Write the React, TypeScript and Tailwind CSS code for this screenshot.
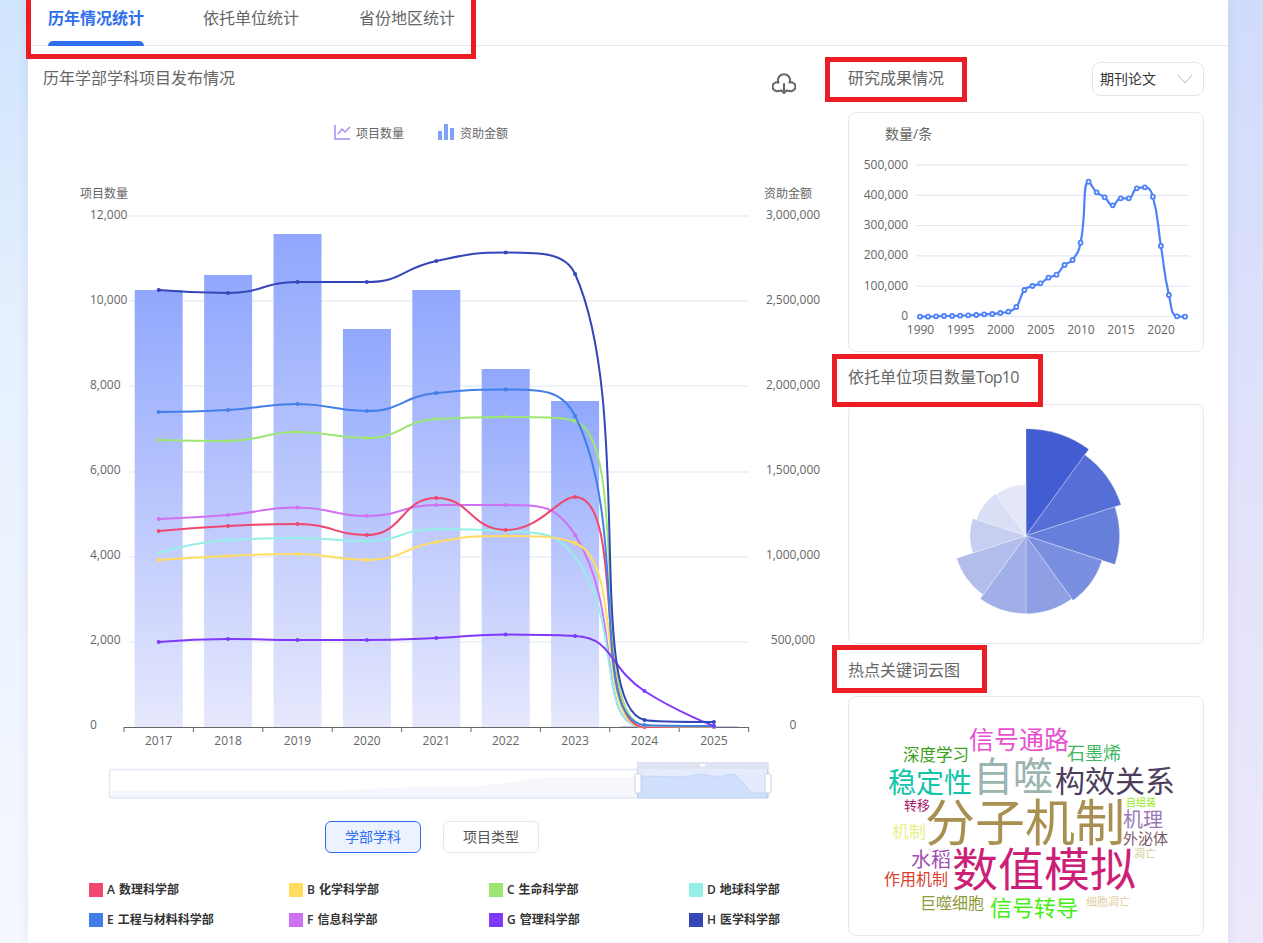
import React from 'react';

const years = ['2017', '2018', '2019', '2020', '2021', '2022', '2023', '2024', '2025'];
const stepX = 69.4;
const catX = (i: number) => 158.7 + i * stepX;

const barTops = [290, 275, 234, 329, 290, 369, 401, 726, 726];

const series = [
  { color: '#cf71f3', ys: [519, 515, 507.5, 516, 505, 505, 535, 727, 727] },
  { color: '#96efe6', ys: [553, 540, 538, 541, 529, 531, 557, 727, 727] },
  { color: '#ffdd5f', ys: [560, 556, 554, 560, 542, 536, 543, 727, 727] },
  { color: '#ef476f', ys: [531, 526, 524, 535, 498, 530, 497, 727, 727] },
  { color: '#9ee672', ys: [440, 441, 432, 438, 419, 417, 421, 725.5, 726.5] },
  { color: '#427fe8', ys: [412, 410, 404, 411, 393, 389.5, 416, 725, 726] },
  { color: '#7f39fb', ys: [642, 639, 640, 640, 638, 634.5, 636, 691, 726] },
  { color: '#3547b8', ys: [290, 293, 282, 282, 261, 252.5, 274, 720, 722] },
];

const clamp = (v: number, a: number, b: number) => Math.max(Math.min(v, Math.max(a, b)), Math.min(a, b));

// smooth line with the control points kept inside each segment's range
function smooth(pts: [number, number][], s = 0.5) {
  let d = `M${pts[0][0]} ${pts[0][1]}`;
  let cx0 = pts[0][0];
  let cy0 = pts[0][1];
  for (let i = 1; i < pts.length; i++) {
    const [x, y] = pts[i];
    const [px, py] = pts[i - 1];
    let cx1 = x;
    let cy1 = y;
    let nx0 = x;
    let ny0 = y;
    if (i < pts.length - 1) {
      const [nx, ny] = pts[i + 1];
      const lenPrev = Math.hypot(x - px, y - py);
      const lenNext = Math.hypot(nx - x, ny - y);
      const ratio = lenNext / (lenNext + lenPrev);
      nx0 = clamp(x + (nx - px) * s * ratio, nx, x);
      ny0 = clamp(y + (ny - py) * s * ratio, ny, y);
      cx1 = clamp(x - ((nx0 - x) * lenPrev) / lenNext, px, x);
      cy1 = clamp(y - ((ny0 - y) * lenPrev) / lenNext, py, y);
      nx0 = x + ((x - cx1) * lenNext) / lenPrev;
      ny0 = y + ((y - cy1) * lenNext) / lenPrev;
    }
    d += ` C${cx0} ${cy0} ${cx1} ${cy1} ${x} ${y}`;
    cx0 = nx0;
    cy0 = ny0;
  }
  return d;
}

const leftTicks = ['12,000', '10,000', '8,000', '6,000', '4,000', '2,000', '0'];
const rightTicks = ['3,000,000', '2,500,000', '2,000,000', '1,500,000', '1,000,000', '500,000', '0'];
const gridY = [216, 301, 386, 472, 557, 642];

const output = [800, 800, 799, 798, 798, 797, 796, 795, 793, 792, 789, 785, 771, 720, 708, 700, 683, 674, 645, 630, 578, 395, 427, 442, 466, 445, 445, 415, 412, 440, 588, 735, 799, 800];
const outputPts = output.map((z, i) => [920 + i * 8.03, 50 + z / 3] as [number, number]);

const roseCx = 1026;
const roseCy = 535.7;
const rose = [
  { r: 107, c: '#425cd1' },
  { r: 100, c: '#556fd6' },
  { r: 93.5, c: '#667fdb' },
  { r: 80, c: '#7a8fdf' },
  { r: 78, c: '#8e9fe3' },
  { r: 78, c: '#a0afe8' },
  { r: 73, c: '#b3bdec' },
  { r: 56, c: '#c6cef1' },
  { r: 52, c: '#d9dff5' },
  { r: 51, c: '#e3e7f8' },
];

function slice(i: number, r: number) {
  const a0 = (i * 36 * Math.PI) / 180;
  const a1 = ((i + 1) * 36 * Math.PI) / 180;
  const x0 = roseCx + r * Math.sin(a0);
  const y0 = roseCy - r * Math.cos(a0);
  const x1 = roseCx + r * Math.sin(a1);
  const y1 = roseCy - r * Math.cos(a1);
  return `M${roseCx} ${roseCy} L${x0} ${y0} A${r} ${r} 0 0 1 ${x1} ${y1} Z`;
}

const words = [
  { t: '信号通路', x: 969, y: 739, s: 25, c: '#e850d0' },
  { t: '深度学习', x: 903, y: 754, s: 16.5, c: '#3a9e18' },
  { t: '石墨烯', x: 1067, y: 753, s: 18, c: '#3fb860' },
  { t: '稳定性', x: 888, y: 782, s: 28, c: '#12c4a8' },
  { t: '自噬', x: 973, y: 775, s: 40, c: '#9ab5ae' },
  { t: '构效关系', x: 1055, y: 780, s: 30, c: '#4d3d5c' },
  { t: '转移', x: 904, y: 805, s: 13, c: '#a8186b' },
  { t: '分子机制', x: 925, y: 822, s: 50, c: '#a89050' },
  { t: '自组装', x: 1126, y: 802, s: 10, c: '#98e820' },
  { t: '机理', x: 1123, y: 819, s: 20, c: '#9a7ab5' },
  { t: '机制', x: 892, y: 831, s: 17, c: '#e8f08a' },
  { t: '外泌体', x: 1123, y: 838, s: 15, c: '#7d5a6a' },
  { t: '凋亡', x: 1134, y: 853, s: 11, c: '#d8cf9a' },
  { t: '水稻', x: 911, y: 859, s: 20, c: '#a04db0' },
  { t: '数值模拟', x: 952, y: 868, s: 46, c: '#cc1f78' },
  { t: '作用机制', x: 884, y: 879, s: 16, c: '#d9402f' },
  { t: '巨噬细胞', x: 920, y: 903, s: 16, c: '#8f9a3a' },
  { t: '信号转导', x: 990, y: 907, s: 22, c: '#44ee10' },
  { t: '细胞凋亡', x: 1086, y: 901, s: 11, c: '#e2d0a5' },
];

const depts = [
  { l: 'A', n: '数理科学部', c: '#ef476f' },
  { l: 'B', n: '化学科学部', c: '#ffdd5f' },
  { l: 'C', n: '生命科学部', c: '#9ee672' },
  { l: 'D', n: '地球科学部', c: '#96efe6' },
  { l: 'E', n: '工程与材料科学部', c: '#427fe8' },
  { l: 'F', n: '信息科学部', c: '#cf71f3' },
  { l: 'G', n: '管理科学部', c: '#7f39fb' },
  { l: 'H', n: '医学科学部', c: '#3547b8' },
];

const MainChart = () => (
  <svg viewBox="28 100 820 700" className="block w-[820px] h-[700px]" fontSize="12" fill="#666">
    <defs>
      <linearGradient id="barFill" x1="0" y1="0" x2="0" y2="1">
        <stop offset="0" stopColor="#90a7fd" />
        <stop offset="1" stopColor="#e6e8fd" />
      </linearGradient>
    </defs>

    {/* legend */}
    <path d="M335 125V139H350M338 134L342 129L345 132L350 127" fill="none" stroke="#a98bf5" strokeWidth="1.5" />
    <text x="356" y="133" dominantBaseline="central">项目数量</text>
    <rect x="438" y="131" width="4" height="9" fill="#7ea2f8" />
    <rect x="444" y="124" width="4" height="16" fill="#7ea2f8" />
    <rect x="450" y="128" width="4" height="12" fill="#7ea2f8" />
    <text x="460" y="133" dominantBaseline="central">资助金额</text>

    <text x="80" y="193" dominantBaseline="central">项目数量</text>
    <text x="764" y="193" dominantBaseline="central">资助金额</text>

    {gridY.map((y) => (
      <line key={y} x1="129" x2="749" y1={y} y2={y} stroke="#dfe5f3" />
    ))}
    {leftTicks.map((t, i) => (
      <text key={t} x="90" y={214.6 + i * 85} dominantBaseline="central">{t}</text>
    ))}
    {rightTicks.map((t, i) => (
      <text key={t} x="793" y={214.6 + i * 85} textAnchor="middle" dominantBaseline="central">{t}</text>
    ))}

    {barTops.map((top, i) => (
      <rect
        key={years[i]}
        x={catX(i) - 24}
        y={top}
        width="48"
        height={727 - top}
        fill={i > 6 ? '#c0c9f5' : 'url(#barFill)'}
      />
    ))}

    <line x1="124" x2="749" y1="727.5" y2="727.5" stroke="#666" />
    {Array.from({ length: 10 }, (_, i) => (
      <line key={i} x1={124 + i * stepX} x2={124 + i * stepX} y1="727" y2="732" stroke="#666" />
    ))}
    {years.map((y, i) => (
      <text key={y} x={catX(i)} y="740" textAnchor="middle" dominantBaseline="central">{y}</text>
    ))}

    {series.map((s) => {
      const pts = s.ys.map((y, i) => [catX(i), y] as [number, number]);
      return (
        <g key={s.color}>
          <path d={smooth(pts)} fill="none" stroke={s.color} strokeWidth="2" />
          {pts.map(([x, y]) => (
            <circle key={x} cx={x} cy={y} r="2" fill={s.color} />
          ))}
        </g>
      );
    })}

    {/* data zoom */}
    <rect x="109.5" y="769.5" width="659" height="28.5" rx="2" fill="#fff" stroke="#e2e7f5" strokeWidth="1.5" />
    <path d="M110 791L327 791L414 787L477 786L516 782L533 778L638 777V797H110Z" fill="#f6f7fc" />
    <rect x="638" y="769" width="130" height="29" fill="#e3ebfc" />
    <path d="M638 776L683 777L702 774L718 777L735 774L752 793L768 793V798H638Z" fill="#d0dffb" stroke="#bdd0f8" strokeWidth="0.75" />
    <rect x="637" y="762" width="132" height="7" fill="#dfe4f2" />
    <rect x="700" y="764" width="5" height="2.5" fill="#fff" />
    <line x1="637.5" x2="637.5" y1="769" y2="798" stroke="#c3cfe8" />
    <line x1="767.5" x2="767.5" y1="769" y2="798" stroke="#c3cfe8" />
    <rect x="635" y="774" width="6" height="19" rx="1.5" fill="#fff" stroke="#c3cfe8" />
    <rect x="765" y="774" width="6" height="19" rx="1.5" fill="#fff" stroke="#c3cfe8" />
  </svg>
);

const OutputChart = () => (
  <svg viewBox="849 113 354 238" className="block w-[354px] h-[238px]" fontSize="12" fill="#666">
    <text x="885" y="133" fontSize="14" dominantBaseline="central">数量/条</text>
    {['500,000', '400,000', '300,000', '200,000', '100,000', '0'].map((t, i) => {
      const y = 165 + i * 30.3;
      return (
        <g key={t}>
          <line x1="916" x2="1189" y1={y} y2={y} stroke="#dfe4f2" />
          <text x="908" y={y - 1} textAnchor="end" dominantBaseline="central">{t}</text>
        </g>
      );
    })}
    {['1990', '1995', '2000', '2005', '2010', '2015', '2020'].map((t, i) => (
      <text key={t} x={920.5 + i * 40.1} y="329.5" textAnchor="middle" dominantBaseline="central">{t}</text>
    ))}
    <path d={smooth(outputPts)} fill="none" stroke="#4f82f6" strokeWidth="2.2" />
    {outputPts.map(([x, y]) => (
      <circle key={x} cx={x} cy={y} r="2" fill="#fff" stroke="#4f82f6" strokeWidth="1.8" />
    ))}
  </svg>
);

const RoseChart = () => (
  <svg viewBox="849 405 354 238" className="block w-[354px] h-[238px]">
    {rose.map((s, i) => (
      <path key={i} d={slice(i, s.r)} fill={s.c} stroke="#fff" strokeWidth="0.3" />
    ))}
  </svg>
);

const WordCloud = () => (
  <svg viewBox="849 697 354 238" className="block w-[354px] h-[238px]">
    {words.map((w) => (
      <text key={w.t} x={w.x} y={w.y} fontSize={w.s} fill={w.c} dominantBaseline="central">{w.t}</text>
    ))}
  </svg>
);

const DownloadIcon = () => (
  <svg viewBox="0 0 24 24" className="mt-[25px] h-6 w-6" fill="none" stroke="#666" strokeWidth="2" strokeLinecap="round" strokeLinejoin="round">
    <path d="M8 20H6A4.4 4.4 0 1 1 6.5 11.6A6 6 0 1 1 17.5 11.6A4.4 4.4 0 1 1 18 20H16" />
    <path d="M12 13V22M9.2 19.2L12 22L14.8 19.2" />
  </svg>
);

const Mark = ({ className }: { className: string }) => (
  <div className={`absolute border-[5px] border-[#ec1c24] ${className}`} />
);

export default function App() {
  return (
    <div className="relative h-[943px] overflow-hidden [background:linear-gradient(#cfe4fd,#e6f0fe_35%,#f5f8ff)_left/50%_100%_no-repeat,linear-gradient(#d0dcfb,#e4e3fa_60%,#ece9fb)_right/50%_100%_no-repeat] font-['Open_Sans','Noto_Sans_CJK_SC',sans-serif]">
      <div className="ml-[28px] h-[943px] w-[1200px] bg-white shadow-[0_0_10px_rgba(120,130,170,0.15)]">
        <div className="flex h-[46px] gap-[60px] pl-[20px] border-b border-[#e5e7eb]">
          <div className="flex h-[46px] w-[96px] flex-col justify-between text-base font-semibold text-[#2f6fed]">
            <span className="leading-[36px]">历年情况统计</span>
            <span className="block h-[5px] rounded-t-md bg-[#2f6fed]" />
          </div>
          <div className="-ml-px text-base leading-[36px] text-[#666]">依托单位统计</div>
          <div className="text-base leading-[36px] text-[#666]">省份地区统计</div>
        </div>

        <div className="flex">
          <div className="w-[820px]">
            <div className="flex h-[54px] items-start justify-between pl-[15px] pr-[52px]">
              <h2 className="mt-[20px] text-base leading-6 text-[#666]">历年学部学科项目发布情况</h2>
              <DownloadIcon />
            </div>
            <MainChart />
            <div className="mt-[21px] flex justify-center gap-[22px] pr-[12px]">
              <button className="h-8 w-24 rounded-md border border-[#2f6fed] bg-[#ecf3fe] text-sm text-[#2f6fed]">学部学科</button>
              <button className="h-8 w-24 rounded-md border border-[#e5e7eb] bg-white text-sm text-[#555]">项目类型</button>
            </div>
            <div className="mt-[30px] grid grid-cols-[repeat(4,200px)] gap-y-[16px] pl-[61px]">
              {depts.map((d) => (
                <div key={d.l} className="flex h-[14px] items-center gap-1 text-xs font-semibold text-[#333]">
                  <span className="h-[14px] w-[14px]" style={{ backgroundColor: d.c }} />
                  <span><span className="mr-1">{d.l}</span>{d.n}</span>
                </div>
              ))}
            </div>
          </div>

          <div className="w-[356px]">
            <div className="flex h-[66px] items-start justify-between pt-[16px]">
              <h2 className="text-base leading-8 text-[#666]">研究成果情况</h2>
              <div className="flex h-[34px] w-[112px] items-center justify-between rounded-lg border border-[#e5e7eb] pl-[7px] pr-[10px] text-sm text-[#333]">
                <span>期刊论文</span>
                <svg width="16" height="10" viewBox="0 0 16 10" fill="none" stroke="#bbb">
                  <path d="M1 1L8 9L15 1" />
                </svg>
              </div>
            </div>
            <div className="rounded-lg border border-[#e8e8ee]"><OutputChart /></div>
            <h2 className="flex h-[52px] items-center pb-[2px] text-base text-[#666]">依托单位项目数量<span className="tracking-[-0.8px]">Top10</span></h2>
            <div className="rounded-lg border border-[#e8e8ee]"><RoseChart /></div>
            <h2 className="flex h-[52px] items-center text-base text-[#666]">热点关键词云图</h2>
            <div className="rounded-lg border border-[#e8e8ee]"><WordCloud /></div>
          </div>
        </div>
      </div>

      <Mark className="left-[26px] top-[-5px] h-[64px] w-[450px]" />
      <Mark className="left-[825px] top-[57px] h-[45px] w-[142px]" />
      <Mark className="left-[832px] top-[354px] h-[53px] w-[211px]" />
      <Mark className="left-[832px] top-[645px] h-[48px] w-[155px]" />
    </div>
  );
}
